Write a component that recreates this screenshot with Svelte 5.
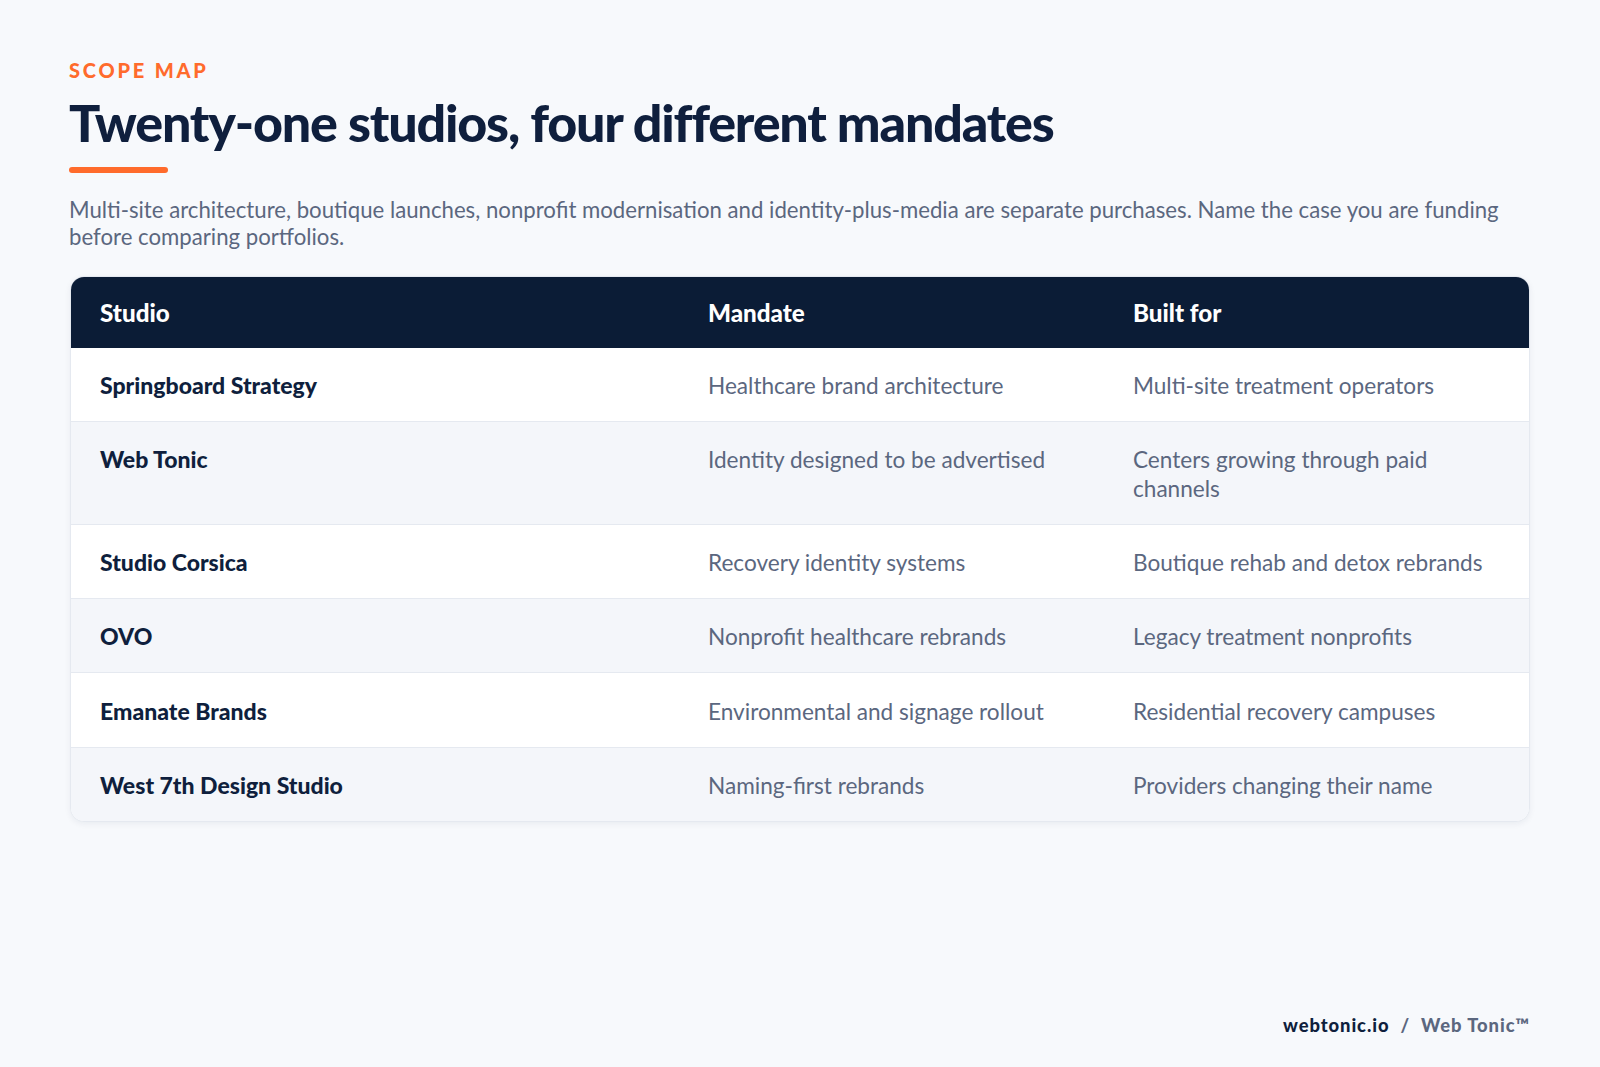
<script lang="ts">
  const rows = [
    { studio: "Springboard Strategy", mandate: "Healthcare brand architecture", builtFor: "Multi-site treatment operators" },
    { studio: "Web Tonic", mandate: "Identity designed to be advertised", builtFor: "Centers growing through paid channels" },
    { studio: "Studio Corsica", mandate: "Recovery identity systems", builtFor: "Boutique rehab and detox rebrands" },
    { studio: "OVO", mandate: "Nonprofit healthcare rebrands", builtFor: "Legacy treatment nonprofits" },
    { studio: "Emanate Brands", mandate: "Environmental and signage rollout", builtFor: "Residential recovery campuses" },
    { studio: "West 7th Design Studio", mandate: "Naming-first rebrands", builtFor: "Providers changing their name" },
  ];
</script>

<main class="slide">
  <div class="eyebrow">SCOPE MAP</div>
  <h1>Twenty-one studios, four different mandates</h1>
  <div class="rule"></div>
  <p class="lede">Multi-site architecture, boutique launches, nonprofit modernisation and identity-plus-media are separate purchases. Name the case you are funding before comparing portfolios.</p>

  <div class="table-wrap">
    <table>
      <thead>
        <tr>
          <th class="col-studio">Studio</th>
          <th class="col-mandate">Mandate</th>
          <th>Built for</th>
        </tr>
      </thead>
      <tbody>
        {#each rows as row}
          <tr>
            <td class="studio">{row.studio}</td>
            <td>{row.mandate}</td>
            <td>{row.builtFor}</td>
          </tr>
        {/each}
      </tbody>
    </table>
  </div>

  <footer><strong>webtonic.io</strong><span class="sep">/</span><span>Web Tonic™</span></footer>
</main>

<style>
  :global(body) {
    margin: 0;
    background: #f7f9fc;
  }

  .slide {
    height: 1067px;
    box-sizing: border-box;
    padding: 57px 70px 0 69px;
    display: flex;
    flex-direction: column;
    font-family: Lato, sans-serif;
  }

  .eyebrow {
    font-size: 20px;
    line-height: 26px;
    font-weight: 900;
    letter-spacing: 0.14em;
    color: #ff6b2c;
  }

  h1 {
    margin: 8px 0 0;
    font-size: 52px;
    line-height: 62px;
    font-weight: 900;
    letter-spacing: -0.023em;
    color: #0f1f3d;
  }

  .rule {
    width: 99px;
    height: 6px;
    margin-top: 14px;
    border-radius: 3px;
    background: #ff6b2c;
  }

  .lede {
    margin: 22.5px 0 0;
    font-size: 22.2px;
    line-height: 27.5px;
    color: #5b677f;
  }

  .table-wrap {
    margin: 25.5px 0 0 1px;
    border: 1px solid #e5e9f0;
    border-radius: 14px;
    overflow: hidden;
    background: #fff;
    box-shadow: 0 2px 6px rgba(15, 31, 61, 0.06);
  }

  table {
    width: 100%;
    border-collapse: collapse;
    table-layout: fixed;
  }

  th {
    box-sizing: border-box;
    padding: 21.5px 29px;
    font-size: 24.2px;
    line-height: 28px;
    font-weight: 900;
    text-align: left;
    color: #fff;
    background: #0b1c36;
  }

  .col-studio {
    width: 41.7%;
  }

  .col-mandate {
    width: 29.15%;
  }

  td {
    box-sizing: border-box;
    padding: 23.2px 29px 20.9px;
    font-size: 22.6px;
    line-height: 28.2px;
    vertical-align: baseline;
    color: #5b677f;
    border-bottom: 1px solid #e5e9f0;
  }

  tbody tr:last-child td {
    border-bottom: 0;
  }

  tbody tr:nth-child(even) td {
    background: #f4f6fa;
  }

  td.studio {
    font-size: 23px;
    font-weight: 900;
    color: #0f1f3d;
  }

  footer {
    margin-top: auto;
    margin-bottom: 31px;
    align-self: flex-end;
    display: flex;
    gap: 11px;
    font-size: 18.4px;
    font-weight: 900;
    letter-spacing: 0.05em;
    color: #5b677f;
  }

  footer strong {
    color: #0f1f3d;
    font-weight: 900;
  }
</style>
